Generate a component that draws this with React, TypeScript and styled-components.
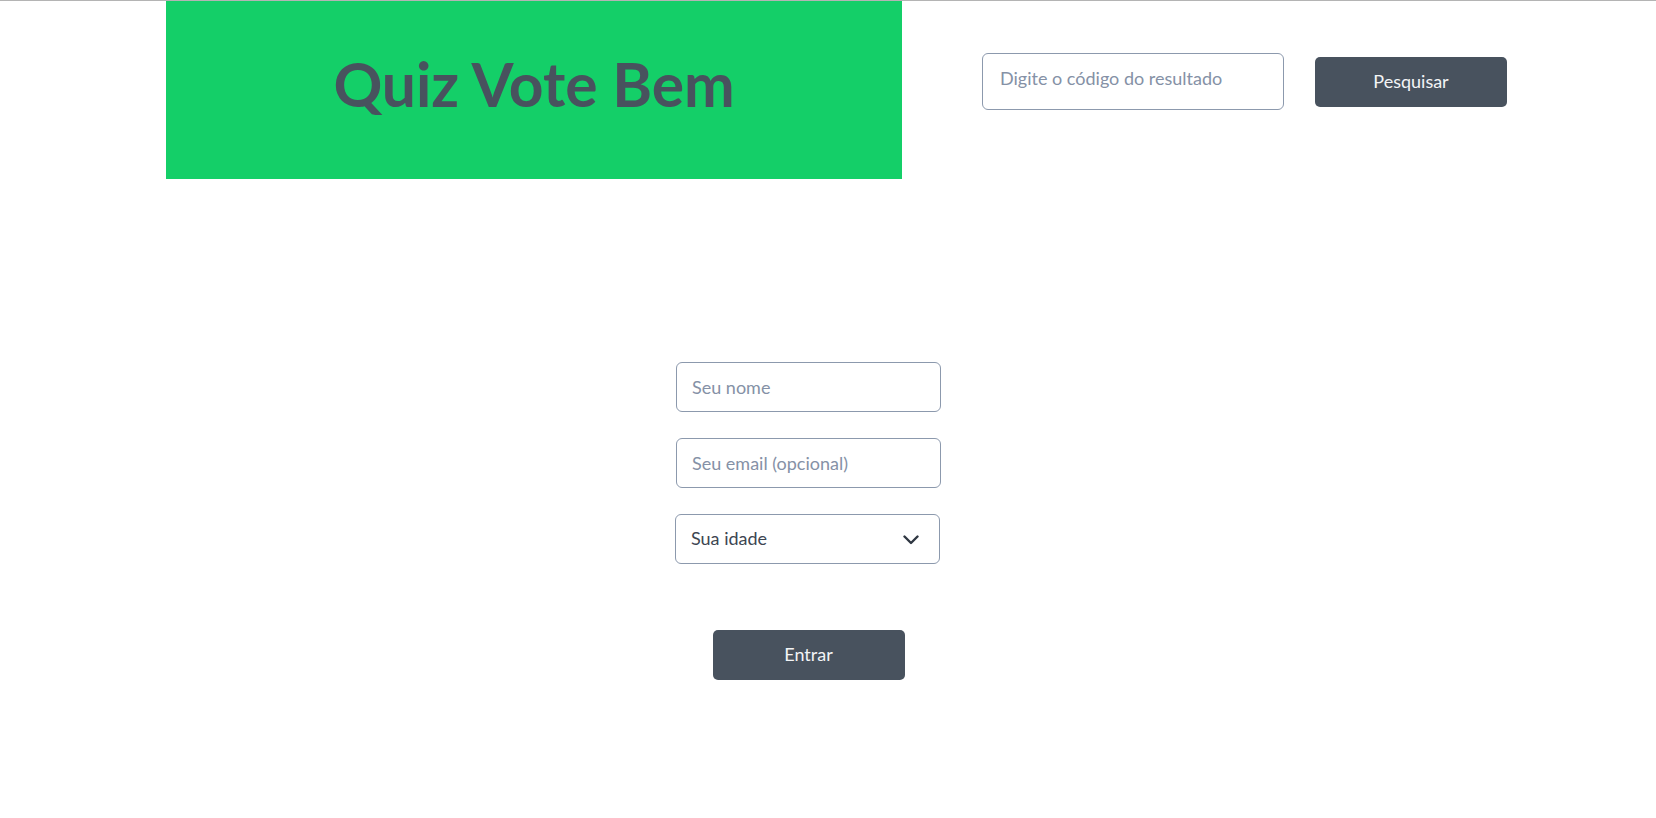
import React from "react";
import styled, { createGlobalStyle } from "styled-components";

const GlobalStyle = createGlobalStyle`
  html, body {
    margin: 0;
    padding: 0;
    background: #ffffff;
    font-family: Lato, "Open Sans", Arial, sans-serif;
  }
  * { box-sizing: border-box; }
`;

const Page = styled.div`
  border-top: 1px solid #b4b4b4;
  min-height: 817px;
`;

const Header = styled.header`
  display: flex;
  align-items: flex-start;
  padding-left: 166px;
`;

const Banner = styled.div`
  width: 736px;
  height: 178px;
  padding-bottom: 12px;
  background: #14cf68;
  display: flex;
  align-items: center;
  justify-content: center;
`;

const Title = styled.h1`
  margin: 0;
  font-family: Lato, sans-serif;
  font-weight: 700;
  font-size: 60.5px;
  color: #48525e;
  letter-spacing: 0;
  line-height: 1;
`;

const SearchForm = styled.form`
  display: flex;
  align-items: flex-start;
  gap: 31px;
  margin: 52px 0 0 80px;
`;

const TextInput = styled.input<{ $w: number; $h: number; $pad: number }>`
  width: ${(p) => p.$w}px;
  height: ${(p) => p.$h}px;
  padding: 0 ${(p) => p.$pad}px;
  border: 1px solid #8c99ad;
  border-radius: 6px;
  font-family: Lato, sans-serif;
  font-size: 18px;
  color: #3d4652;
  background: #fff;
  outline: none;
  &::placeholder {
    color: #8591a6;
  }
`;

const DarkButton = styled.button<{ $mt?: number }>`
  width: 192px;
  height: 50px;
  margin-top: ${(p) => p.$mt ?? 0}px;
  padding: 0 0 3px;
  border: none;
  border-radius: 5px;
  background: #48525e;
  color: #f3f4f6;
  font-family: Lato, sans-serif;
  font-size: 18px;
  cursor: pointer;
`;

const SearchInput = styled(TextInput)`
  padding-bottom: 8px;
`;

const Main = styled.main`
  display: flex;
  flex-direction: column;
  width: 265px;
  margin: 183px 0 0 676px;
`;

const Fields = styled.div`
  display: flex;
  flex-direction: column;
  gap: 26px;
`;

const SelectWrap = styled.div`
  position: relative;
  width: 265px;
  height: 50px;
  margin-left: -1px;
`;

const Select = styled.select`
  appearance: none;
  -webkit-appearance: none;
  width: 100%;
  height: 100%;
  padding: 0 44px 2px 15px;
  border: 1px solid #8c99ad;
  border-radius: 6px;
  background: #fff;
  font-family: Lato, sans-serif;
  font-size: 18px;
  color: #3d4652;
  outline: none;
`;

const Chevron = styled.svg`
  position: absolute;
  right: 21px;
  top: 21px;
  width: 16px;
  height: 10px;
  pointer-events: none;
`;

const Submit = styled(DarkButton)`
  align-self: center;
`;

export default function App() {
  return (
    <>
      <GlobalStyle />
      <Page>
        <Header>
          <Banner>
            <Title>Quiz Vote Bem</Title>
          </Banner>
          <SearchForm onSubmit={(e) => e.preventDefault()}>
            <SearchInput $w={302} $h={57} $pad={17} placeholder="Digite o código do resultado" />
            <DarkButton type="submit" $mt={4}>Pesquisar</DarkButton>
          </SearchForm>
        </Header>
        <Main>
          <Fields>
            <TextInput $w={265} $h={50} $pad={15} placeholder="Seu nome" />
            <TextInput $w={265} $h={50} $pad={15} placeholder="Seu email (opcional)" />
            <SelectWrap>
              <Select defaultValue="">
                <option value="">Sua idade</option>
                <option value="16-17">16 a 17 anos</option>
                <option value="18-24">18 a 24 anos</option>
                <option value="25-34">25 a 34 anos</option>
                <option value="35-44">35 a 44 anos</option>
                <option value="45+">45 anos ou mais</option>
              </Select>
              <Chevron viewBox="0 0 16 10">
                <path d="M1.5 1.5 L8 8 L14.5 1.5" fill="none" stroke="#2f3742" strokeWidth="2.4" strokeLinecap="round" strokeLinejoin="round" />
              </Chevron>
            </SelectWrap>
          </Fields>
          <Submit $mt={66}>Entrar</Submit>
        </Main>
      </Page>
    </>
  );
}
